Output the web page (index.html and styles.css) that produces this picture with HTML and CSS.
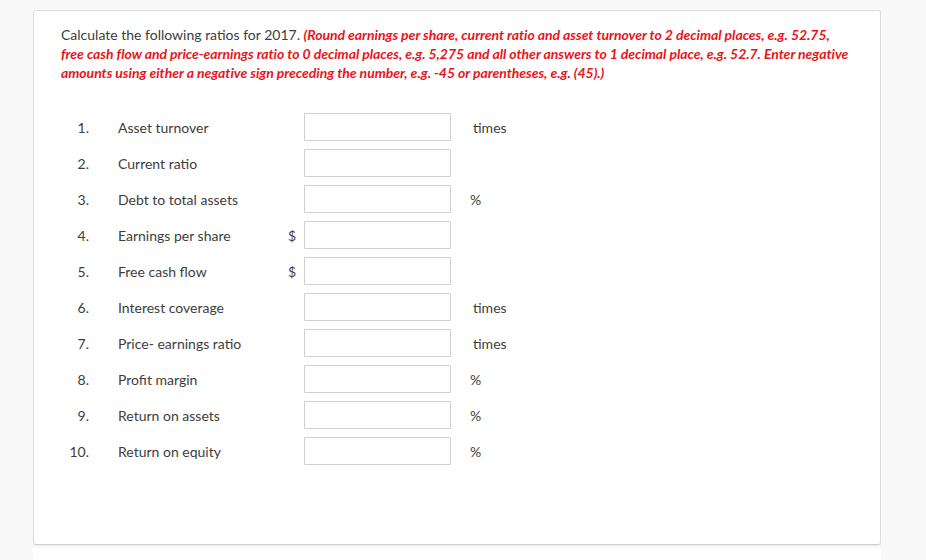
FILE: index.html
```html
<!DOCTYPE html>
<html>
<head>
<meta charset="utf-8">
<link rel="stylesheet" href="styles.css">
</head>
<body>
<div class="page">
  <div class="card">
    <p class="intro">Calculate the following ratios for 2017. <em class="note">(Round earnings per share, current ratio and asset turnover to 2 decimal places, e.g. 52.75,<br>free cash flow and price-earnings ratio to 0 decimal places, e.g. 5,275 and all other answers to 1 decimal place, e.g. 52.7. Enter negative<br>amounts using either a negative sign preceding the number, e.g. -45 or parentheses, e.g. (45).)</em></p>
    <div class="rows">
      <div class="row"><span class="num">1.</span><span class="label">Asset turnover</span><span class="cur"></span><input class="box" type="text"><span class="unit">times</span></div>
      <div class="row"><span class="num">2.</span><span class="label">Current ratio</span><span class="cur"></span><input class="box" type="text"><span class="unit"></span></div>
      <div class="row"><span class="num">3.</span><span class="label">Debt to total assets</span><span class="cur"></span><input class="box" type="text"><span class="unit pct">%</span></div>
      <div class="row"><span class="num">4.</span><span class="label">Earnings per share</span><span class="cur">$</span><input class="box" type="text"><span class="unit"></span></div>
      <div class="row"><span class="num">5.</span><span class="label">Free cash flow</span><span class="cur">$</span><input class="box" type="text"><span class="unit"></span></div>
      <div class="row"><span class="num">6.</span><span class="label">Interest coverage</span><span class="cur"></span><input class="box" type="text"><span class="unit">times</span></div>
      <div class="row"><span class="num">7.</span><span class="label">Price- earnings ratio</span><span class="cur"></span><input class="box" type="text"><span class="unit">times</span></div>
      <div class="row"><span class="num">8.</span><span class="label">Profit margin</span><span class="cur"></span><input class="box" type="text"><span class="unit pct">%</span></div>
      <div class="row"><span class="num">9.</span><span class="label">Return on assets</span><span class="cur"></span><input class="box" type="text"><span class="unit pct">%</span></div>
      <div class="row"><span class="num">10.</span><span class="label">Return on equity</span><span class="cur"></span><input class="box" type="text"><span class="unit pct">%</span></div>
    </div>
  </div>
  <div class="next"></div>
</div>
</body>
</html>
```

FILE: styles.css
```css
html, body {
  margin: 0;
  padding: 0;
  background: #f9f9f9;
  font-family: Lato, "Open Sans", sans-serif;
  color: #3d3d3d;
}
.page {
  width: 848px;
  margin-left: 33px;
  padding-top: 10px;
}
.card {
  box-sizing: border-box;
  height: 535px;
  background: #fff;
  border: 1px solid #dcdcdc;
  border-bottom-color: #cfcfcf;
  border-radius: 3px;
  box-shadow: 0 1px 1px rgba(0,0,0,0.05);
  padding: 14px 20px 0 27px;
}
.intro {
  margin: 0;
  font-size: 14px;
  line-height: 19px;
  white-space: nowrap;
}
.note {
  color: #e8141b;
  font-weight: bold;
  font-style: italic;
  letter-spacing: -0.04px;
}
.rows {
  margin-top: 31px;
  display: flex;
  flex-direction: column;
  gap: 8px;
}
.row {
  display: flex;
  align-items: center;
  height: 28px;
  font-size: 14px;
}
.num {
  width: 28px;
  text-align: right;
}
.label {
  width: 160px;
  margin-left: 29px;
}
.cur {
  width: 18px;
  padding-right: 8px;
  text-align: right;
}
.box {
  box-sizing: border-box;
  width: 147px;
  height: 28px;
  margin: 0;
  border: 1px solid #cfcfcf;
  border-radius: 1px;
  background: #fff;
  font: inherit;
}
.unit {
  margin-left: 22px;
}
.unit.pct {
  margin-left: 19px;
}
.next {
  margin-top: 3px;
  height: 40px;
  background: #fff;
}
```
